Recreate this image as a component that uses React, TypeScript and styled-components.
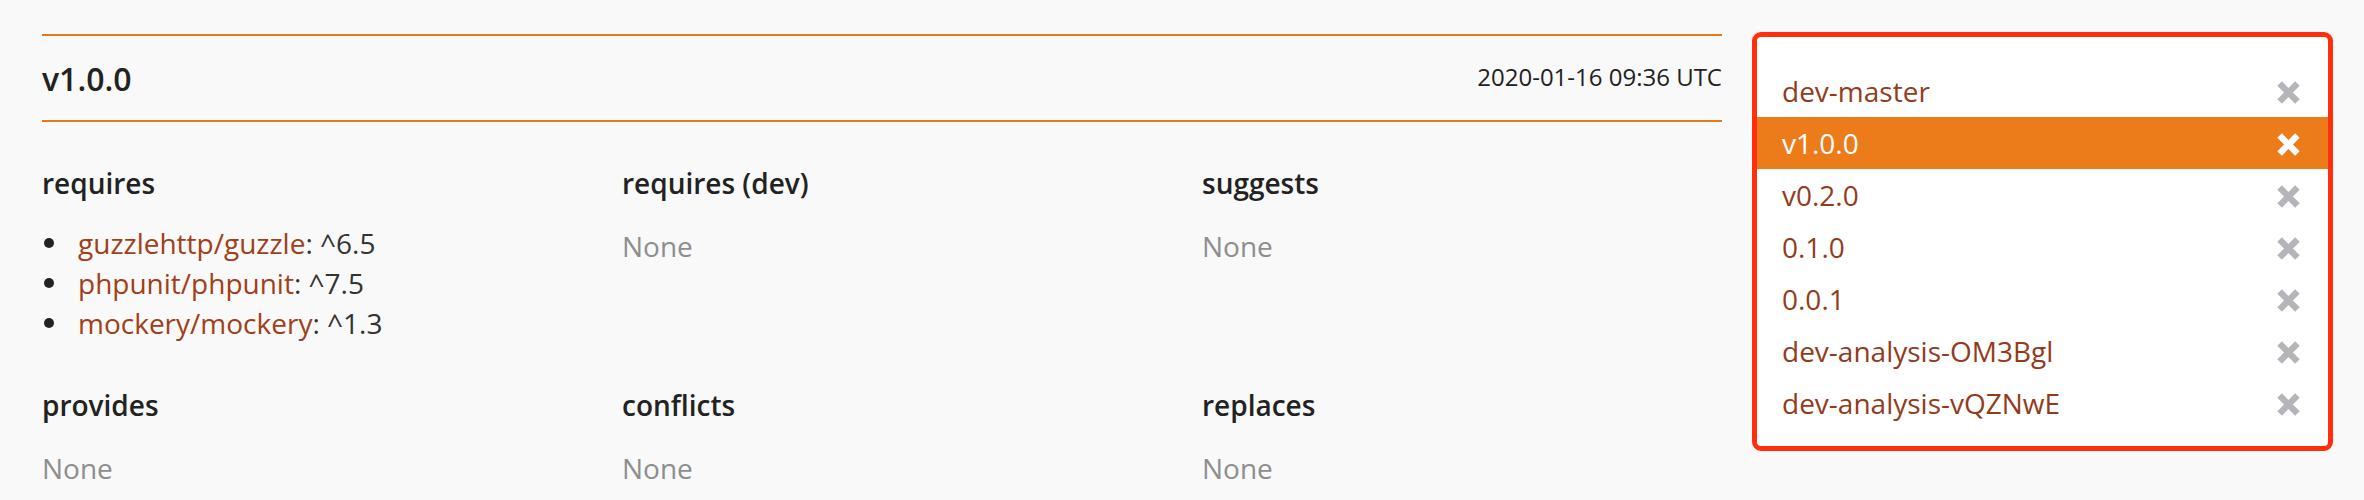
import React from "react";
import styled, { createGlobalStyle } from "styled-components";

const GlobalStyle = createGlobalStyle`
  html, body {
    margin: 0;
    padding: 0;
    background: #f9f9f9;
  }
  body {
    font-family: "Open Sans", "Noto Sans", "Liberation Sans", sans-serif;
    font-size: 28px;
    line-height: 40px;
    color: #333;
  }
  * { box-sizing: border-box; }
`;

const Page = styled.div`
  display: flex;
  align-items: flex-start;
  width: 2364px;
  padding-left: 12px;
`;

const Main = styled.main`
  width: 1740px;
  padding: 34px 30px 0 30px;
`;

const VersionHeader = styled.header`
  display: flex;
  align-items: center;
  justify-content: space-between;
  height: 88px;
  border-top: 2px solid #e27a22;
  border-bottom: 2px solid #e27a22;
`;

const VersionTitle = styled.h2`
  margin: 0;
  font-size: 32px;
  line-height: 35px;
  font-weight: 600;
  color: #222;
`;

const ReleaseDate = styled.span`
  font-size: 24px;
  line-height: 30px;
  color: #222;
  margin-top: -3px;
`;

const MetaGrid = styled.div`
  display: grid;
  grid-template-columns: repeat(3, 1fr);
  column-gap: 20px;
  row-gap: 42px;
  padding-top: 41px;
  margin-right: -40px;
`;

const MetaBlock = styled.section`
  display: flex;
  flex-direction: column;
`;

const MetaHeading = styled.h3`
  margin: 0 0 20px 0;
  font-size: 28px;
  line-height: 40px;
  font-weight: 600;
  color: #222;
`;

const DepList = styled.ul`
  list-style: none;
  margin: 0;
  padding: 0;
`;

const DepItem = styled.li`
  display: flex;
  align-items: center;
  height: 40px;
  color: #333;

  &::before {
    content: "";
    flex: none;
    width: 10px;
    height: 10px;
    border-radius: 50%;
    background: #222;
    margin: 0 24px 0 2px;
  }
`;

const DepLink = styled.a`
  color: #a13f18;
  text-decoration: none;
`;

const NoneText = styled.p`
  margin: 0;
  padding-top: 3px;
  color: #8e8e8e;
`;

const Aside = styled.aside`
  padding-top: 32px;
`;

const VersionPanel = styled.div`
  width: 581px;
  background: #ffffff;
  border: 5px solid #ff2e0c;
  border-radius: 9px;
  padding: 28px 0 17px 0;
`;

const VersionList = styled.ul`
  list-style: none;
  margin: 0;
  padding: 0;
`;

const VersionRow = styled.li<{ $active?: boolean }>`
  display: flex;
  align-items: center;
  justify-content: space-between;
  height: 52px;
  padding: 0 28px 0 25px;
  background: ${(p) => (p.$active ? "#ec7b1a" : "transparent")};
`;

const VersionLink = styled.a<{ $active?: boolean }>`
  font-size: 28px;
  line-height: 52px;
  color: ${(p) => (p.$active ? "#ffffff" : "#923c1c")};
  text-decoration: none;
`;

const RemoveIcon = styled.svg<{ $active?: boolean }>`
  flex: none;
  width: 23px;
  height: 23px;
  margin-top: 3px;
  color: ${(p) => (p.$active ? "#ffffff" : "#b3b5b9")};
`;

const Remove = ({ active }: { active?: boolean }) => (
  <RemoveIcon $active={active} viewBox="0 0 23 23" aria-hidden="true">
    <g stroke="currentColor" strokeWidth="6.4" strokeLinecap="butt">
      <line x1="2.6" y1="2.6" x2="20.4" y2="20.4" />
      <line x1="20.4" y1="2.6" x2="2.6" y2="20.4" />
    </g>
  </RemoveIcon>
);

type Dep = { name: string; constraint: string };

const requires: Dep[] = [
  { name: "guzzlehttp/guzzle", constraint: "^6.5" },
  { name: "phpunit/phpunit", constraint: "^7.5" },
  { name: "mockery/mockery", constraint: "^1.3" },
];

const blocks: { title: string; deps: Dep[] }[] = [
  { title: "requires", deps: requires },
  { title: "requires (dev)", deps: [] },
  { title: "suggests", deps: [] },
  { title: "provides", deps: [] },
  { title: "conflicts", deps: [] },
  { title: "replaces", deps: [] },
];

const versions = [
  "dev-master",
  "v1.0.0",
  "v0.2.0",
  "0.1.0",
  "0.0.1",
  "dev-analysis-OM3Bgl",
  "dev-analysis-vQZNwE",
];

export default function App() {
  return (
    <>
      <GlobalStyle />
      <Page>
        <Main>
          <VersionHeader>
            <VersionTitle>v1.0.0</VersionTitle>
            <ReleaseDate>2020-01-16 09:36 UTC</ReleaseDate>
          </VersionHeader>
          <MetaGrid>
            {blocks.map((b) => (
              <MetaBlock key={b.title}>
                <MetaHeading>{b.title}</MetaHeading>
                {b.deps.length > 0 ? (
                  <DepList>
                    {b.deps.map((d) => (
                      <DepItem key={d.name}>
                        <span>
                          <DepLink href="#">{d.name}</DepLink>: {d.constraint}
                        </span>
                      </DepItem>
                    ))}
                  </DepList>
                ) : (
                  <NoneText>None</NoneText>
                )}
              </MetaBlock>
            ))}
          </MetaGrid>
        </Main>
        <Aside>
          <VersionPanel>
            <VersionList>
              {versions.map((v) => {
                const active = v === "v1.0.0";
                return (
                  <VersionRow key={v} $active={active}>
                    <VersionLink href="#" $active={active}>
                      {v}
                    </VersionLink>
                    <Remove active={active} />
                  </VersionRow>
                );
              })}
            </VersionList>
          </VersionPanel>
        </Aside>
      </Page>
    </>
  );
}
